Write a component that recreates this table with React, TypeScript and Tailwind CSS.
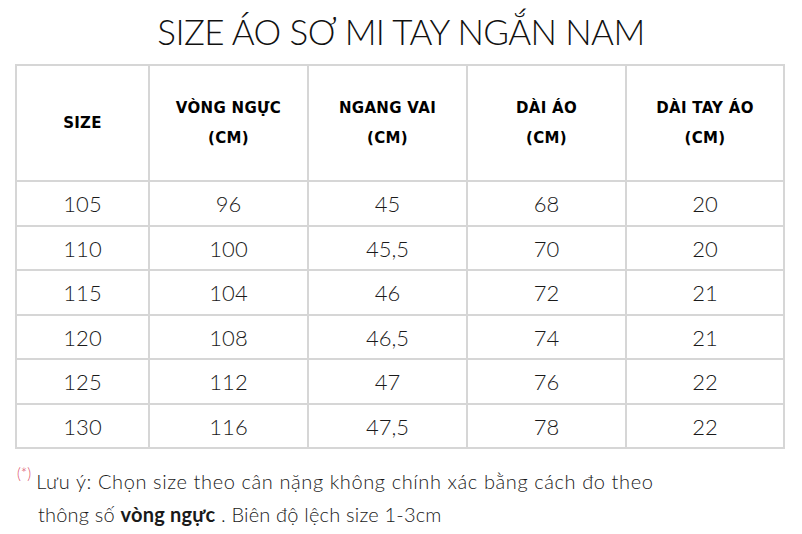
import React from "react";

const rows = [
  ["105", "96", "45", "68", "20"],
  ["110", "100", "45,5", "70", "20"],
  ["115", "104", "46", "72", "21"],
  ["120", "108", "46,5", "74", "21"],
  ["125", "112", "47", "76", "22"],
  ["130", "116", "47,5", "78", "22"],
];

const headers = [
  ["SIZE"],
  ["VÒNG NGỰC", "(CM)"],
  ["NGANG VAI", "(CM)"],
  ["DÀI ÁO", "(CM)"],
  ["DÀI TAY ÁO", "(CM)"],
];

const widths = ["w-[133px]", "w-[159px]", "w-[159px]", "w-[159px]", "w-[158px]"];

export default function App() {
  return (
    <div className="w-[802px] h-[534px] bg-white overflow-hidden text-[#111]">
      <div className="h-[64px] flex items-start justify-center pt-[14px]">
        <h1 className="text-[35px] leading-none font-light tracking-[-0.6px] [font-family:Lato,'Open_Sans',sans-serif]">
          SIZE ÁO SƠ MI TAY NGẮN NAM
        </h1>
      </div>
      <div className="pl-[15px]">
        <table className="border-collapse border-2 border-[#d6d6d6] w-[770px] table-fixed">
          <thead>
            <tr className="h-[116px]">
              {headers.map((h, i) => (
                <th
                  key={i}
                  className={`${widths[i]} border-2 border-[#d6d6d6] text-center align-middle text-[15px] font-bold leading-[30px] tracking-[0.3px] [font-family:'DejaVu_Sans',sans-serif] text-black`}
                >
                  {h.map((l, j) => (
                    <div key={j}>{l}</div>
                  ))}
                </th>
              ))}
            </tr>
          </thead>
          <tbody>
            {rows.map((r, i) => (
              <tr key={i} className="h-[44.5px]">
                {r.map((c, j) => (
                  <td
                    key={j}
                    className="border-2 border-[#d6d6d6] text-center align-middle text-[22px] font-light leading-none [font-family:Lato,sans-serif] text-[#1a1a1a] pt-[2px]"
                  >
                    {c}
                  </td>
                ))}
              </tr>
            ))}
          </tbody>
        </table>
      </div>
      <div className="pl-[17px] pt-[16px] text-[20px] font-light [font-family:Lato,sans-serif] text-[#1a1a1a] leading-[33px]">
        <div className="flex items-start">
          <span className="text-[15px] text-[#d9475f] leading-none mt-[1px] mr-[5px]">(*)</span>
          <span className="tracking-[0.6px]">Lưu ý: Chọn size theo cân nặng không chính xác bằng cách đo theo</span>
        </div>
        <div className="pl-[21px] tracking-[0.2px]">
          thông số <span className="font-bold">vòng ngực</span> . Biên độ lệch size 1-3cm
        </div>
      </div>
    </div>
  );
}
